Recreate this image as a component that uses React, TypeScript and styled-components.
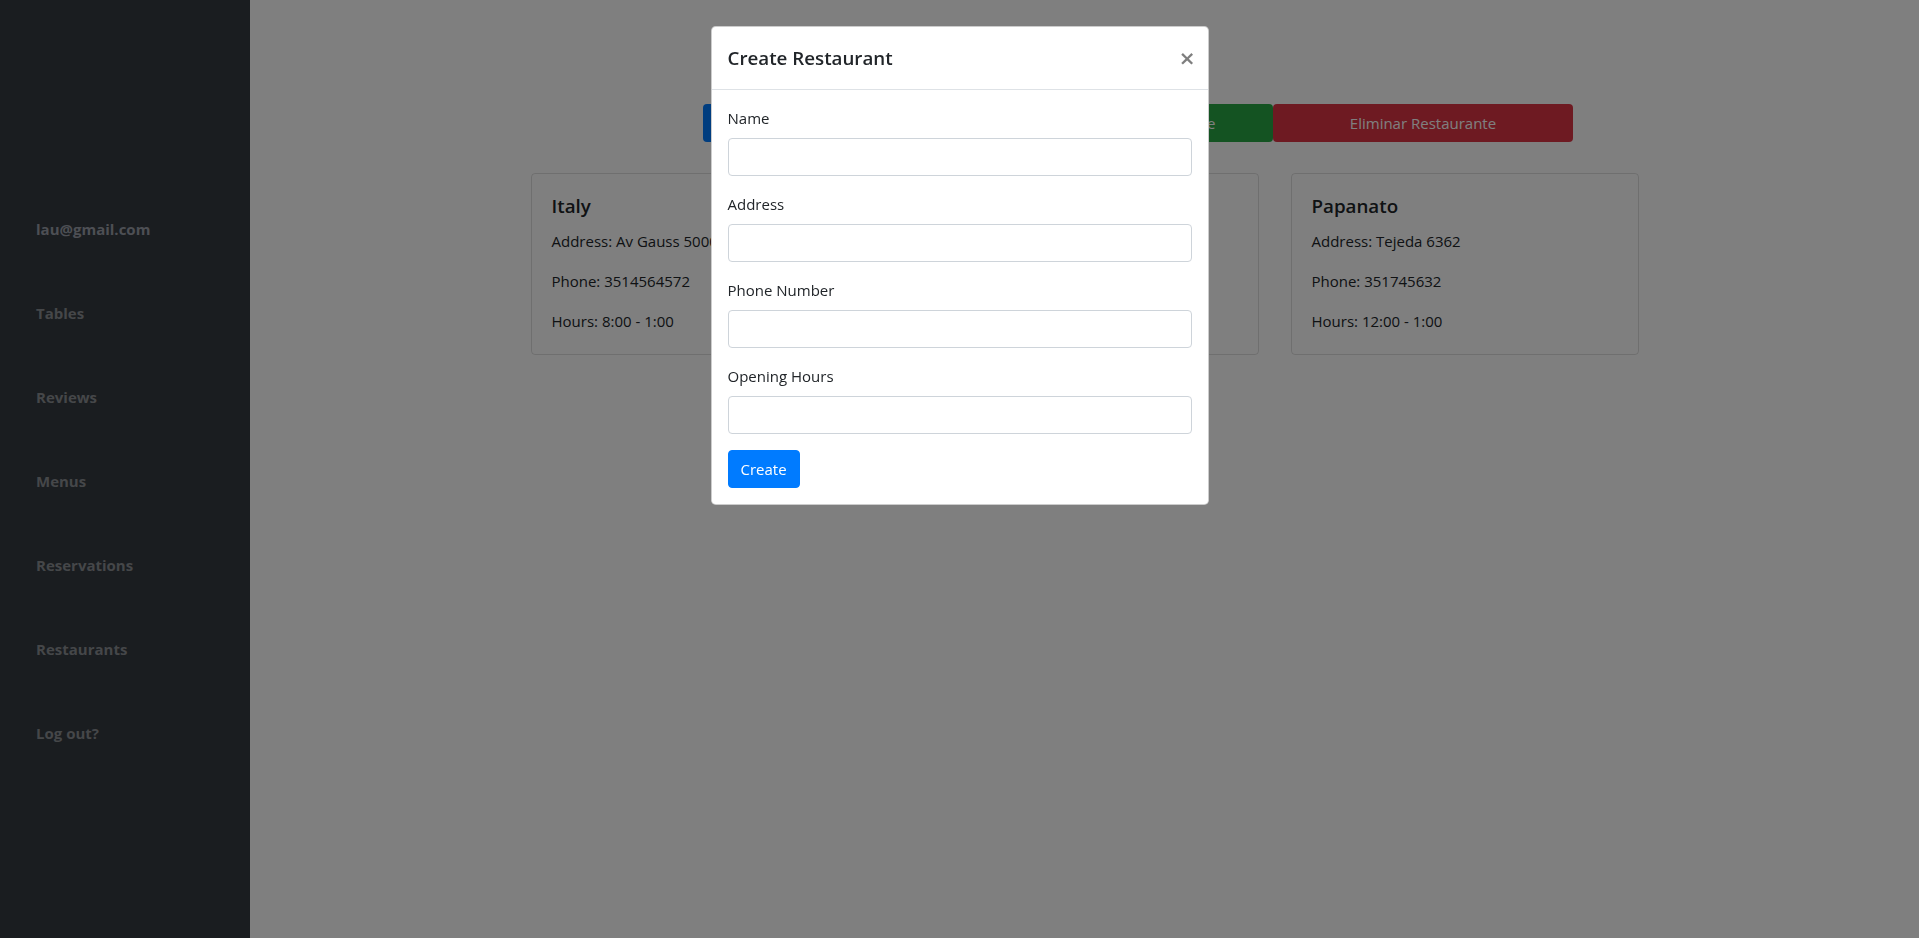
import React from "react";
import styled, { createGlobalStyle } from "styled-components";

const GlobalStyle = createGlobalStyle`
  *, *::before, *::after { box-sizing: border-box; }
  html, body { margin: 0; padding: 0; }
  body {
    font-family: "Open Sans", "Noto Sans", sans-serif;
    font-size: 15px;
    line-height: 24px;
    color: #212529;
    background: #fff;
  }
`;

const Layout = styled.div`
  display: flex;
  min-height: 938px;
`;

const Sidebar = styled.nav`
  flex: 0 0 250px;
  background: #343a40;
  display: flex;
  flex-direction: column;
  gap: 60px;
  padding: 217px 36px 0;
`;

const NavLink = styled.a<{ $brand?: boolean }>`
  display: block;
  font-size: 15px;
  font-weight: 700;
  line-height: 24px;
  color: ${(p) => (p.$brand ? "#9b9fa8" : "#8b8e93")};
  text-decoration: none;
`;

const Main = styled.main`
  flex: 1;
  display: flex;
  flex-direction: column;
  align-items: center;
  padding-top: 104px;
`;

const ButtonRow = styled.div`
  display: flex;
  margin-left: 107px;
  margin-bottom: 31px;
`;

const ActionButton = styled.button<{ $variant: "primary" | "success" | "danger"; $width: number }>`
  width: ${(p) => p.$width}px;
  height: 38px;
  border: 1px solid transparent;
  border-radius: 4px;
  font-family: inherit;
  font-size: 15px;
  line-height: 24px;
  color: #fff;
  background: ${(p) =>
    p.$variant === "primary" ? "#007bff" : p.$variant === "success" ? "#28a745" : "#dc3545"};
  cursor: pointer;
`;

const CardRow = styled.div`
  display: flex;
  gap: 32px;
`;

const Card = styled.div`
  width: 348px;
  border: 1px solid rgba(0, 0, 0, 0.125);
  border-radius: 4px;
  padding: 20px;
`;

const CardTitle = styled.h5`
  margin: 0 0 12px;
  font-size: 18.75px;
  font-weight: 600;
  line-height: 24px;
`;

const CardText = styled.p`
  margin: -1px 0 17px;
  &:last-child { margin-bottom: 1px; }
`;

const Backdrop = styled.div`
  position: fixed;
  inset: 0;
  background: rgba(0, 0, 0, 0.5);
  display: flex;
  justify-content: center;
  align-items: flex-start;
  padding-top: 26px;
`;

const ModalContent = styled.div`
  width: 498px;
  background: #fff;
  border: 1px solid rgba(0, 0, 0, 0.2);
  border-radius: 4.8px;
`;

const ModalHeader = styled.div`
  display: flex;
  justify-content: space-between;
  align-items: flex-start;
  padding: 16px;
  border-bottom: 1px solid #dee2e6;
`;

const ModalTitle = styled.h5`
  margin: 0;
  font-size: 18.75px;
  font-weight: 600;
  line-height: 30px;
`;

const CloseButton = styled.button`
  padding: 21px 12px 11px 16px;
  margin: -16px -16px -16px auto;
  background: transparent;
  border: 0;
  font-family: "DejaVu Sans", sans-serif;
  font-size: 20px;
  font-weight: 700;
  line-height: 1;
  color: #000;
  opacity: 0.5;
  text-shadow: 0 1px 0 #fff;
  cursor: pointer;
`;

const ModalBody = styled.div`
  padding: 16px;
`;

const FormGroup = styled.div`
  margin-bottom: 16px;
`;

const Label = styled.label`
  display: block;
  margin-bottom: 8px;
`;

const Input = styled.input`
  display: block;
  width: 100%;
  height: 38px;
  padding: 6px 12px;
  font-family: inherit;
  font-size: 15px;
  color: #495057;
  background: #fff;
  border: 1px solid #ced4da;
  border-radius: 4px;
`;

const SubmitButton = styled.button`
  padding: 6px 12px;
  font-family: inherit;
  font-size: 15px;
  line-height: 24px;
  color: #fff;
  background: #007bff;
  border: 1px solid #007bff;
  border-radius: 4px;
  cursor: pointer;
`;

const navItems = ["Tables", "Reviews", "Menus", "Reservations", "Restaurants", "Log out?"];

const restaurants = [
  { name: "Italy", address: "Av Gauss 5000", phone: "3514564572", hours: "8:00 - 1:00" },
  { name: "La Esquina", address: "Colon 1420", phone: "3516789012", hours: "9:00 - 0:00" },
  { name: "Papanato", address: "Tejeda 6362", phone: "351745632", hours: "12:00 - 1:00" },
];

const fields = ["Name", "Address", "Phone Number", "Opening Hours"];

export default function App() {
  return (
    <>
      <GlobalStyle />
      <Layout>
        <Sidebar>
          <NavLink $brand href="#">lau@gmail.com</NavLink>
          {navItems.map((item) => (
            <NavLink key={item} href="#">{item}</NavLink>
          ))}
        </Sidebar>
        <Main>
          <ButtonRow>
            <ActionButton $variant="primary" $width={300}>Crear Restaurante</ActionButton>
            <ActionButton $variant="success" $width={270}>Modificar Restaurante</ActionButton>
            <ActionButton $variant="danger" $width={300}>Eliminar Restaurante</ActionButton>
          </ButtonRow>
          <CardRow>
            {restaurants.map((r) => (
              <Card key={r.name}>
                <CardTitle>{r.name}</CardTitle>
                <CardText>Address: {r.address}</CardText>
                <CardText>Phone: {r.phone}</CardText>
                <CardText>Hours: {r.hours}</CardText>
              </Card>
            ))}
          </CardRow>
        </Main>
      </Layout>
      <Backdrop>
        <ModalContent>
          <ModalHeader>
            <ModalTitle>Create Restaurant</ModalTitle>
            <CloseButton aria-label="Close">×</CloseButton>
          </ModalHeader>
          <ModalBody>
            {fields.map((f) => (
              <FormGroup key={f}>
                <Label>{f}</Label>
                <Input type="text" />
              </FormGroup>
            ))}
            <SubmitButton>Create</SubmitButton>
          </ModalBody>
        </ModalContent>
      </Backdrop>
    </>
  );
}
